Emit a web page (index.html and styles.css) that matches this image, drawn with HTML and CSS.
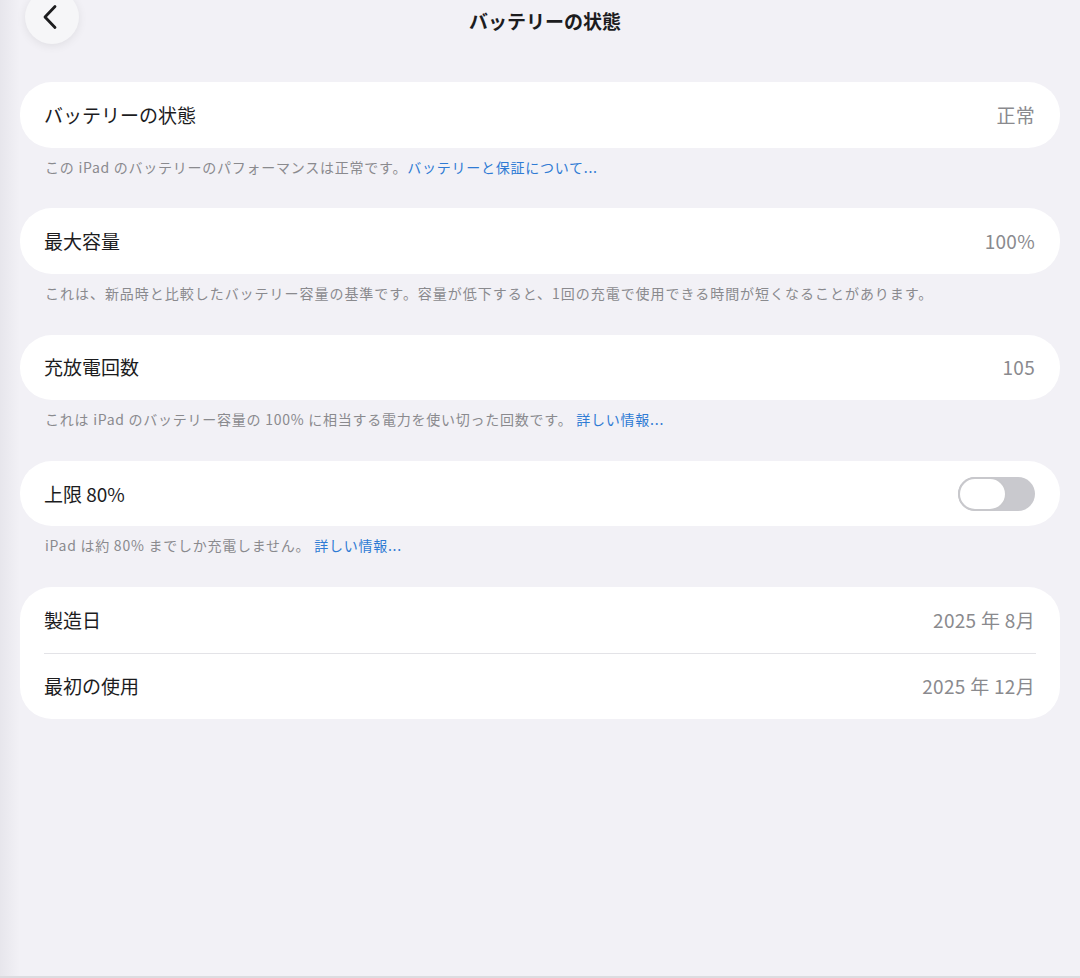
FILE: index.html
```html
<!DOCTYPE html>
<html lang="ja">
<head>
<meta charset="utf-8">
<title>バッテリーの状態</title>
<link rel="stylesheet" href="styles.css">
</head>
<body>
<div class="page">
  <header class="nav">
    <div class="nav-left">
      <button class="back" aria-label="戻る">
        <svg width="20" height="26" viewBox="0 0 20 26"><path d="M14 2.5 L4 13 L14 23.5" fill="none" stroke="#1c1c1e" stroke-width="2.8" stroke-linecap="round" stroke-linejoin="round"/></svg>
      </button>
    </div>
    <h1 class="title">バッテリーの状態</h1>
    <div class="nav-right"></div>
  </header>

  <main class="content">
    <section class="group">
      <div class="row"><span class="label">バッテリーの状態</span><span class="value">正常</span></div>
    </section>
    <p class="footer">この iPad のバッテリーのパフォーマンスは正常です。<a class="link">バッテリーと保証について...</a></p>

    <section class="group">
      <div class="row"><span class="label">最大容量</span><span class="value">100%</span></div>
    </section>
    <p class="footer wide">これは、新品時と比較したバッテリー容量の基準です。容量が低下すると、1回の充電で使用できる時間が短くなることがあります。</p>

    <section class="group">
      <div class="row"><span class="label">充放電回数</span><span class="value">105</span></div>
    </section>
    <p class="footer">これは iPad のバッテリー容量の 100% に相当する電力を使い切った回数です。 <a class="link">詳しい情報...</a></p>

    <section class="group">
      <div class="row"><span class="label">上限 80%</span><span class="toggle"><span class="knob"></span></span></div>
    </section>
    <p class="footer">iPad は約 80% までしか充電しません。 <a class="link">詳しい情報...</a></p>

    <section class="group">
      <div class="row"><span class="label">製造日</span><span class="value">2025 年 8月</span></div>
      <div class="sep"></div>
      <div class="row"><span class="label">最初の使用</span><span class="value">2025 年 12月</span></div>
    </section>
  </main>
</div>
</body>
</html>
```

FILE: styles.css
```css
html, body {
  margin: 0;
  padding: 0;
}
body {
  width: 1080px;
  height: 978px;
  overflow: hidden;
  background: linear-gradient(to right, #e7e6ec 0, #f2f1f6 20px);
  font-family: "Noto Sans CJK JP", "Noto Sans", sans-serif;
  color: #1c1c1e;
  box-sizing: border-box;
  border-bottom: 2px solid #dcdce0;
}
.page {
  padding: 0 20px;
}
.nav {
  display: grid;
  grid-template-columns: 1fr auto 1fr;
  align-items: center;
  height: 44px;
  padding-left: 10px;
}
.nav-left {
  display: flex;
  align-items: center;
}
.back {
  width: 54px;
  height: 54px;
  margin-left: -5px;
  margin-top: -10px;
  border-radius: 50%;
  border: none;
  background: #f6f6f8;
  box-shadow: 0 2px 10px rgba(0,0,0,0.08);
  display: flex;
  align-items: center;
  justify-content: center;
  padding: 0 3px 0 0;
}
.title {
  margin: 0;
  font-size: 19px;
  font-weight: 700;
  line-height: 24px;
  margin-top: -2px;
}
.content {
  padding-top: 38px;
}
.group {
  background: #ffffff;
  border-radius: 32px;
}
.row {
  height: 65.5px;
  display: flex;
  align-items: center;
  justify-content: space-between;
  padding: 0 25px 0 24px;
}
.label {
  font-size: 19px;
  line-height: 24px;
  color: #1c1c1e;
}
.value {
  font-size: 19px;
  line-height: 24px;
  color: #8a8a8e;
  letter-spacing: 0.3px;
}
.sep {
  height: 1px;
  background: #e3e3e7;
  margin: 0 24px;
}
.footer {
  margin: 0 0 30.8px;
  padding: 9px 25px 0;
  height: 21px;
  font-size: 14px;
  line-height: 20px;
  letter-spacing: 0.75px;
  color: #8a8a8e;
  white-space: nowrap;
}
.footer.wide {
  letter-spacing: 0.97px;
}
.link {
  color: #2f7bd4;
}
.toggle {
  width: 77px;
  height: 34px;
  border-radius: 17px;
  background: #c9c9ce;
  display: flex;
  align-items: center;
  box-sizing: border-box;
}
.knob {
  width: 49px;
  height: 34px;
  border-radius: 17px;
  background: #ffffff;
  border: 2px solid #c8c8cc;
  box-sizing: border-box;
}
```
